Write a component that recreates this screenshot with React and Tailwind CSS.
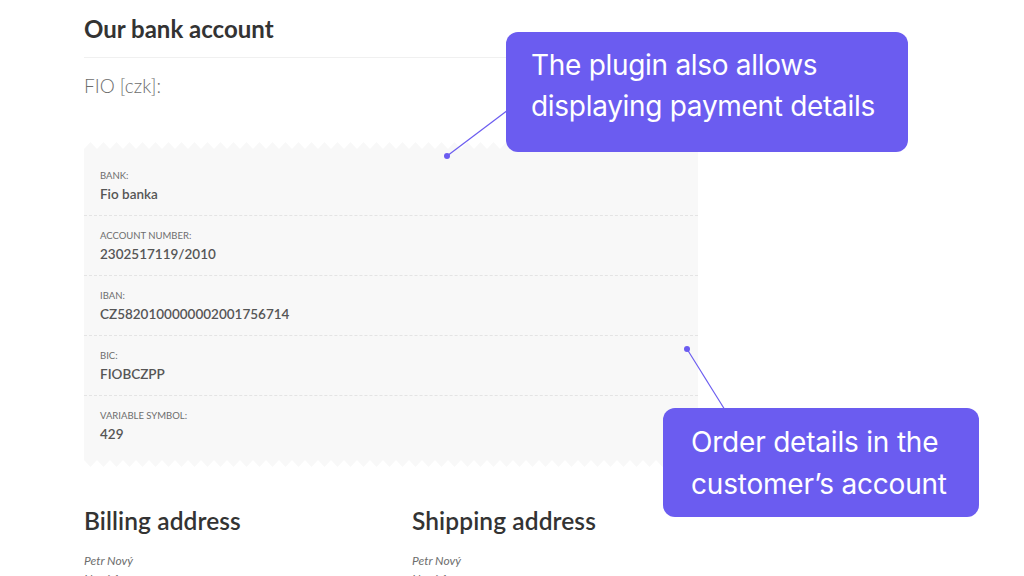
import React from "react";

const rows = [
  ["Bank:", "Fio banka"],
  ["Account number:", "2302517119/2010"],
  ["IBAN:", "CZ5820100000002001756714"],
  ["BIC:", "FIOBCZPP"],
  ["Variable symbol:", "429"],
];

function Zigzag({ flip }) {
  const id = flip ? "zzb" : "zzt";
  return (
    <svg width="614" height="8" className="block" aria-hidden="true">
      <defs>
        <pattern id={id} width="13" height="8" patternUnits="userSpaceOnUse" x="0">
          {flip ? (
            <polygon points="0,0 13,0 6.5,7" fill="#f8f8f8" />
          ) : (
            <polygon points="0,8 6.5,1 13,8" fill="#f8f8f8" />
          )}
        </pattern>
      </defs>
      <rect width="614" height="8" fill={`url(#${id})`} />
    </svg>
  );
}

export default function App() {
  const sans = { fontFamily: '"Source Sans Pro", Lato, "Noto Sans", sans-serif' };
  return (
    <div className="relative w-[1024px] h-[576px] overflow-hidden bg-white" style={sans}>
      <div className="ml-[84px] w-[614px] pt-[13px]">
        <h2 className="text-[24px] leading-[32px] font-bold text-[#333]">Our bank account</h2>
        <div className="mt-[12px] border-t border-[#f0f0f0]" />
        <p className="mt-[15px] text-[19px] leading-[26px] text-[#6d6d6d] font-light">FIO [czk]:</p>
        <div className="mt-[42px]">
          <Zigzag />
          <div className="bg-[#f8f8f8] pt-[7px] pb-[4px]">
            {rows.map(([l, v], i) => (
              <div
                key={l}
                className={`px-4 h-[60px] flex flex-col justify-center ${i < rows.length - 1 ? "border-b border-dashed border-[#e4e4e4]" : ""}`}
              >
                <div className="text-[9.5px] leading-[14px] uppercase text-[#6d6d6d]">{l}</div>
                <div className="mt-[2px] text-[13.5px] leading-[18px] font-semibold text-[#555]">{v}</div>
              </div>
            ))}
          </div>
          <Zigzag flip />
        </div>
        <div className="mt-[37px] grid grid-cols-[328px_1fr]">
          <div>
            <h2 className="text-[24.5px] leading-[32px] font-semibold text-[#333] tracking-[0.1px]">Billing address</h2>
            <p className="mt-[16px] text-[12px] leading-[16px] italic text-[#6d6d6d]">Petr Nový</p>
            <p className="mt-[2px] text-[12px] leading-[16px] italic text-[#6d6d6d]">Nová 1</p>
          </div>
          <div>
            <h2 className="text-[24.5px] leading-[32px] font-semibold text-[#333] tracking-[0.1px]">Shipping address</h2>
            <p className="mt-[16px] text-[12px] leading-[16px] italic text-[#6d6d6d]">Petr Nový</p>
            <p className="mt-[2px] text-[12px] leading-[16px] italic text-[#6d6d6d]">Nová 1</p>
          </div>
        </div>
      </div>

      <svg className="absolute left-0 top-0" width="1024" height="576" aria-hidden="true">
        <line x1="447" y1="156" x2="508" y2="110" stroke="#6b5cf0" strokeWidth="1.2" />
        <circle cx="447" cy="156" r="3" fill="#6b5cf0" />
        <line x1="687" y1="349" x2="725" y2="410" stroke="#6b5cf0" strokeWidth="1.2" />
        <circle cx="687" cy="349" r="3" fill="#6b5cf0" />
      </svg>

      <div
        className="absolute left-[506px] top-[32px] w-[402px] h-[120px] rounded-[12px] bg-[#6b5cf0] text-white pl-[25px] pt-[13px] text-[28px] leading-[41px] tracking-[-0.3px]"
        style={{ fontFamily: 'Inter, sans-serif' }}
      >
        The plugin also allows<br />displaying payment details
      </div>
      <div
        className="absolute left-[663px] top-[408px] w-[316px] h-[109px] rounded-[12px] bg-[#6b5cf0] text-white pl-[28px] pt-[13px] text-[28px] leading-[42px] tracking-[-0.2px]"
        style={{ fontFamily: 'Inter, sans-serif' }}
      >
        Order details in the<br />customer’s account
      </div>
    </div>
  );
}
